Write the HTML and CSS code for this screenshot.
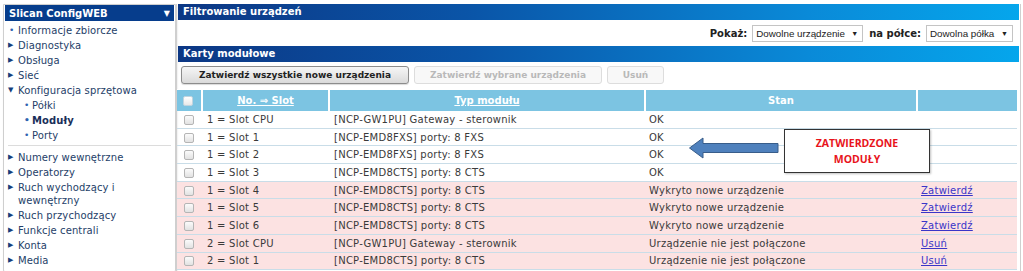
FILE: index.html
```html
<!DOCTYPE html>
<html lang="pl">
<head>
<meta charset="utf-8">
<title>Slican ConfigWEB</title>
<link rel="stylesheet" href="styles.css">
</head>
<body>
<div class="page">
  <aside class="sidebar">
    <div class="side-head"><span>Slican ConfigWEB</span><span class="down">▼</span></div>
    <ul class="menu">
      <li class="leaf">Informacje zbiorcze</li>
      <li class="closed">Diagnostyka</li>
      <li class="closed">Obsługa</li>
      <li class="closed">Sieć</li>
      <li class="open">Konfiguracja sprzętowa</li>
      <li class="leaf sub">Półki</li>
      <li class="leaf sub active">Moduły</li>
      <li class="leaf sub">Porty</li>
      <li class="sep"></li>
      <li class="closed">Numery wewnętrzne</li>
      <li class="closed">Operatorzy</li>
      <li class="closed">Ruch wychodzący i wewnętrzny</li>
      <li class="closed">Ruch przychodzący</li>
      <li class="closed">Funkcje centrali</li>
      <li class="closed">Konta</li>
      <li class="closed">Media</li>
    </ul>
  </aside>
  <main class="main">
    <div class="bar">Filtrowanie urządzeń</div>
    <div class="filter">
      <span class="lbl">Pokaż:</span>
      <span class="select w1">Dowolne urządzenie<span class="caret">▼</span></span>
      <span class="lbl">na półce:</span>
      <span class="select w2">Dowolna półka<span class="caret">▼</span></span>
    </div>
    <div class="bar">Karty modułowe</div>
    <div class="buttons">
      <span class="btn b1">Zatwierdź wszystkie nowe urządzenia</span>
      <span class="btn dis b2">Zatwierdź wybrane urządzenia</span>
      <span class="btn dis b3">Usuń</span>
    </div>
    <table class="grid">
      <colgroup>
        <col class="c1"><col class="c2"><col class="c3"><col class="c4"><col>
      </colgroup>
      <thead>
        <tr>
          <th><span class="cb"></span></th>
          <th><u>No. ⇒ Slot</u></th>
          <th><u>Typ modułu</u></th>
          <th>Stan</th>
          <th></th>
        </tr>
      </thead>
      <tbody>
        <tr><td><span class="cb"></span></td><td>1 = Slot CPU</td><td>[NCP-GW1PU] Gateway - sterownik</td><td>OK</td><td></td></tr>
        <tr><td><span class="cb"></span></td><td>1 = Slot 1</td><td>[NCP-EMD8FXS] porty: 8 FXS</td><td>OK</td><td></td></tr>
        <tr><td><span class="cb"></span></td><td>1 = Slot 2</td><td>[NCP-EMD8FXS] porty: 8 FXS</td><td>OK</td><td></td></tr>
        <tr><td><span class="cb"></span></td><td>1 = Slot 3</td><td>[NCP-EMD8CTS] porty: 8 CTS</td><td>OK</td><td></td></tr>
        <tr class="new"><td><span class="cb"></span></td><td>1 = Slot 4</td><td>[NCP-EMD8CTS] porty: 8 CTS</td><td>Wykryto nowe urządzenie</td><td><a href="#">Zatwierdź</a></td></tr>
        <tr class="new"><td><span class="cb"></span></td><td>1 = Slot 5</td><td>[NCP-EMD8CTS] porty: 8 CTS</td><td>Wykryto nowe urządzenie</td><td><a href="#">Zatwierdź</a></td></tr>
        <tr class="new"><td><span class="cb"></span></td><td>1 = Slot 6</td><td>[NCP-EMD8CTS] porty: 8 CTS</td><td>Wykryto nowe urządzenie</td><td><a href="#">Zatwierdź</a></td></tr>
        <tr class="new"><td><span class="cb"></span></td><td>2 = Slot CPU</td><td>[NCP-GW1PU] Gateway - sterownik</td><td>Urządzenie nie jest połączone</td><td><a href="#">Usuń</a></td></tr>
        <tr class="new"><td><span class="cb"></span></td><td>2 = Slot 1</td><td>[NCP-EMD8CTS] porty: 8 CTS</td><td>Urządzenie nie jest połączone</td><td><a href="#">Usuń</a></td></tr>
      </tbody>
    </table>
  </main>
</div>
<svg class="arrow" width="94" height="24" viewBox="0 0 94 24">
  <path d="M1.5 12 L15 2 L15 7.5 L90 7.5 L90 16.5 L15 16.5 L15 22 Z" fill="#4f81bd" stroke="#385d8a" stroke-width="1"/>
</svg>
<div class="callout">ZATWIERDZONE<br>MODUŁY</div>
</body>
</html>
```
FILE: styles.css
```css
* { box-sizing: border-box; }
html, body { margin: 0; background: #fff; }
body {
  position: relative;
  padding: 4px 2px 0 3px;
  font-family: "DejaVu Sans", Verdana, sans-serif;
  font-size: 10px;
  color: #333;
  overflow: hidden;
  height: 271px;
}
.page { display: flex; align-items: flex-start; }

/* Sidebar */
.sidebar {
  width: 173px;
  flex: none;
  border: 1px solid #cfcfcf;
  border-radius: 0 0 4px 4px;
  padding: 0 0 5px 0;
  box-shadow: 1px 1px 2px rgba(0,0,0,0.18);
}
.side-head {
  display: flex;
  justify-content: space-between;
  align-items: center;
  height: 16px;
  margin: 0 1px;
  padding: 0 4px 0 4px;
  background: #063d8c;
  color: #fff;
  font-weight: bold;
  font-size: 10px;
}
.side-head .down { font-size: 8px; }
.menu { list-style: none; margin: 0; padding: 2px 12px 0 14px; }
.menu li {
  position: relative;
  line-height: 13px;
  padding: 1px 0;
  color: #243e68;
  letter-spacing: 0.1px;
}
.menu li::before {
  position: absolute;
  left: -10px;
  top: 1px;
  color: #163e7a;
}
.menu li.leaf::before { content: "•"; color: #2f63b0; left: -9px; font-size: 9px; }
.menu li.closed::before { content: "▶"; font-size: 7px; left: -10px; }
.menu li.open::before { content: "▼"; font-size: 7px; left: -10px; }
.menu li.sub { margin-left: 14px; }
.menu li.sub::before { left: -8px; }
.menu li.active { font-weight: bold; color: #1a2f5a; }
.menu li.sep {
  height: 1px;
  padding: 0;
  margin: 2px -8px 4px -10px;
  background: #dcdcdc;
}

/* Main */
.main {
  flex: 1;
  min-width: 0;
  border-left: 1px solid #cfcfcf;
  border-right: 1px solid #cfcfcf;
  margin-left: 0;
  height: 270px;
}
.bar {
  height: 16px;
  line-height: 16px;
  margin: 0 1px;
  padding-left: 5px;
  color: #fff;
  font-weight: bold;
  background: linear-gradient(to right, #0c3784 0%, #0a55a8 35%, #0a8ad8 75%, #05a6ec 100%);
}
.filter {
  display: flex;
  justify-content: flex-end;
  align-items: center;
  gap: 5px;
  height: 26px;
  padding: 1px 6px 0 0;
}
.lbl { font-weight: bold; color: #222; }
.lbl + .select { margin-right: 1px; }
.select {
  display: flex;
  align-items: center;
  justify-content: space-between;
  height: 17px;
  padding: 0 4px 0 3px;
  border: 1px solid #c4c4c4;
  background: #fff;
  font-family: "Liberation Sans", Arial, sans-serif;
  font-size: 9.8px;
  color: #222;
  white-space: nowrap;
}
.select .caret { font-size: 7px; margin-left: 4px; }
.select.w1 { width: 111px; }
.select.w2 { width: 87px; }

.buttons {
  display: flex;
  gap: 5px;
  padding: 4px 0 5px 4px;
  height: 27px;
}
.btn {
  display: flex;
  align-items: center;
  justify-content: center;
  height: 18px;
  border: 1px solid #8c8c8c;
  border-radius: 3px;
  background: linear-gradient(#f6f6f6, #dadada);
  font-weight: bold;
  font-size: 9px;
  color: #222;
  box-shadow: 0 1px 1px rgba(0,0,0,0.15);
  white-space: nowrap;
}
.btn.dis {
  border-color: #dddddd;
  background: #f8f8f8;
  color: #b9b9b9;
  box-shadow: none;
}
.b1 { width: 228px; }
.b2 { width: 188px; }
.b3 { width: 57px; }

.grid {
  width: 840px;
  border-collapse: collapse;
  table-layout: fixed;
  margin-left: 0;
  border-top: 1px solid #6f9fc2;
}
.c1 { width: 25px; }
.c2 { width: 127px; }
.c3 { width: 316px; }
.c4 { width: 272px; }
.grid th {
  height: 21px;
  background: #7cc4e2;
  color: #fff;
  font-weight: bold;
  text-align: center;
  border-left: 2px solid #fff;
  border-top: 1px solid #fff;
  padding: 0;
}
.grid th:first-child { border-left: none; text-align: left; padding-left: 6px; }
.grid td {
  height: 17.7px;
  padding: 0 0 0 4px;
  border-bottom: 1px solid #c9dde8;
  white-space: nowrap;
  color: #3a3a3a;
  letter-spacing: 0.25px;
}
.grid td:first-child { padding-left: 7px; }
.grid td:nth-child(2) { padding-left: 5px; }
.grid td:nth-child(3) { padding-left: 5px; }
.grid tr.new td { background: #fce2e2; }
.grid a { color: #3a35c8; }
.cb {
  display: inline-block;
  width: 10px;
  height: 10px;
  border: 1px solid #b5b5b5;
  border-radius: 2px;
  background: linear-gradient(#fbfbfb, #e2e2e2);
  vertical-align: middle;
}
th .cb { border-color: #c0d4df; background: linear-gradient(#ffffff, #e8e8e8); }

/* Annotation overlay */
.arrow { position: absolute; left: 688px; top: 136px; }
.callout {
  position: absolute;
  left: 784px;
  top: 129px;
  width: 146px;
  height: 44px;
  border: 1px solid #333;
  background: #fff;
  color: #e8141b;
  font-family: "Open Sans", "Liberation Sans", sans-serif;
  font-weight: bold;
  font-size: 10.5px;
  line-height: 16px;
  text-align: center;
  padding-top: 5px;
  letter-spacing: 0;
  box-shadow: 1px 1px 2px rgba(0,0,0,0.25);
}
```
